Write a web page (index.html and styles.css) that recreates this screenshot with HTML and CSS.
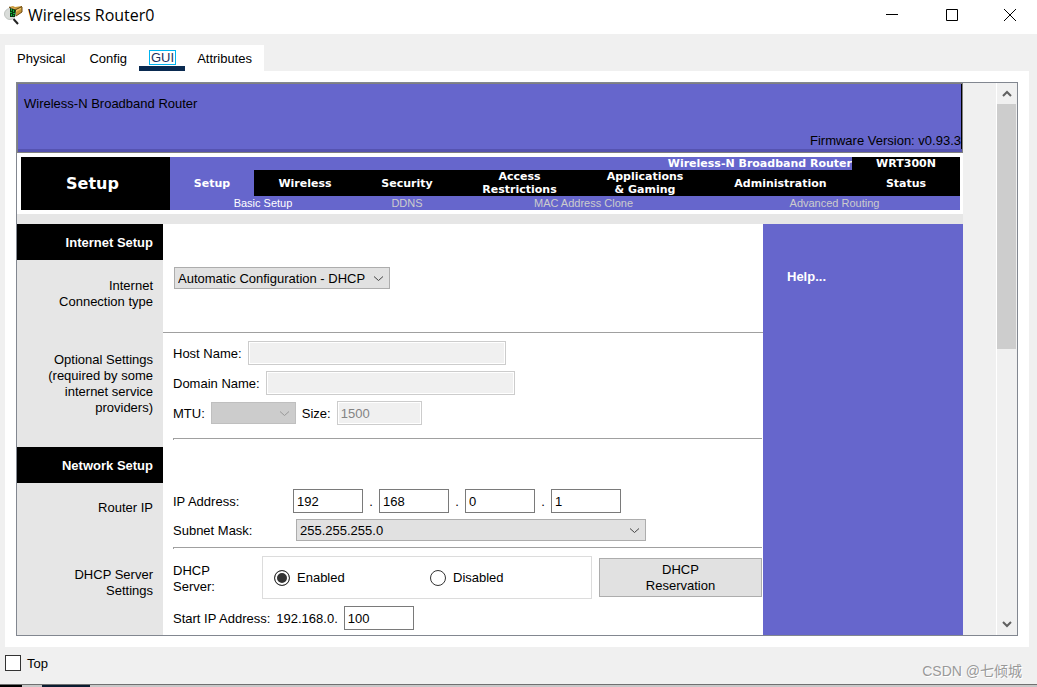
FILE: index.html
```html
<!DOCTYPE html>
<html lang="en">
<head>
<meta charset="utf-8">
<title>Wireless Router0</title>
<link rel="stylesheet" href="styles.css">
</head>
<body>
<div class="window">
  <header class="titlebar">
    <svg class="app-icon" viewBox="0 0 20 20" aria-hidden="true">
      <path d="M5 2 L9 1 L11 2 L18 1 L18 7 L12 11 L6 10 Z" fill="#c8963a"/>
      <path d="M7 2 L12 4 L17 2 L17 4 L12 7 L8 5 Z" fill="#efc567"/>
      <path d="M5 2 L11 5 L18 1.500" fill="none" stroke="#5e4210" stroke-width="1"/>
      <path d="M18 2 L18 7 L12 11" fill="none" stroke="#6e4c12" stroke-width="1"/>
      <circle cx="6" cy="9" r="5.500" fill="#d9dcd9" stroke="#c0c4c0" stroke-width="1"/>
      <path d="M6 3 L12 5 L11 12 L6 12 Z" fill="#07380f"/>
      <path d="M7 4h1v2h-1zM9 5h1v2h-1zM6 7h2v1h-2zM9 8h2v1h-2zM7 9h1v2h-1zM9 10h1v1h-1z" fill="#13b53c"/>
      <path d="M9.500 14 L14 19" stroke="#222" stroke-width="2"/>
    </svg>
    <h1 class="window-title">Wireless Router0</h1>
    <div class="window-controls">
      <button type="button" class="window-button" aria-label="Minimize"><svg viewBox="0 0 12 12"><path d="M0 5.5h12"/></svg></button>
      <button type="button" class="window-button" aria-label="Maximize"><svg viewBox="0 0 12 12"><path d="M.5 .5h11v11h-11z"/></svg></button>
      <button type="button" class="window-button" aria-label="Close"><svg viewBox="0 0 12 12"><path d="M0 0l12 12M12 0L0 12"/></svg></button>
    </div>
  </header>

  <div class="tabs" role="tablist">
    <button type="button" class="tab" role="tab">Physical</button>
    <button type="button" class="tab" role="tab">Config</button>
    <button type="button" class="tab tab-active" role="tab" aria-selected="true"><span class="tab-focus">GUI</span></button>
    <button type="button" class="tab" role="tab">Attributes</button>
  </div>

  <main class="panel">
    <div class="viewport">
      <div class="page">
        <div class="banner">
          <span class="banner-title">Wireless-N Broadband Router</span>
          <span class="banner-version">Firmware Version: v0.93.3</span>
        </div>

        <div class="masthead">
          <h2 class="masthead-title">Setup</h2>
          <nav class="menu">
            <span class="menu-product">Wireless-N Broadband Router</span>
            <span class="menu-model">WRT300N</span>
            <a href="#" class="menu-item menu-item-active">Setup</a>
            <a href="#" class="menu-item">Wireless</a>
            <a href="#" class="menu-item">Security</a>
            <a href="#" class="menu-item">Access<br>Restrictions</a>
            <a href="#" class="menu-item">Applications<br>&amp; Gaming</a>
            <a href="#" class="menu-item">Administration</a>
            <a href="#" class="menu-item">Status</a>
            <a href="#" class="submenu-item submenu-wide submenu-active">Basic Setup</a>
            <a href="#" class="submenu-item">DDNS</a>
            <a href="#" class="submenu-item submenu-wide">MAC Address Clone</a>
            <a href="#" class="submenu-item submenu-wide">Advanced Routing</a>
          </nav>
        </div>

        <div class="columns">
          <form class="settings">
            <section class="group group-internet">
              <div class="side">
                <h3 class="side-title">Internet Setup</h3>
                <label class="side-label" for="connection">Internet<br>Connection type</label>
              </div>
              <div class="fields">
                <span class="select connection">
                  <select id="connection"><option>Automatic Configuration - DHCP</option></select>
                  <svg viewBox="0 0 9 5"><path d="M0 .5l4.500 4l4.500-4"/></svg>
                </span>
              </div>
            </section>

            <section class="group group-optional">
              <div class="side">
                <p class="side-label">Optional Settings<br>(required by some<br>internet service<br>providers)</p>
              </div>
              <div class="fields">
                <div class="row">
                  <label for="host">Host Name:</label>
                  <input id="host" class="input-host" type="text" disabled>
                </div>
                <div class="row">
                  <label for="domain">Domain Name:</label>
                  <input id="domain" class="input-domain" type="text" disabled>
                </div>
                <div class="row">
                  <label for="mtu">MTU:</label>
                  <span class="select mtu">
                    <select id="mtu" disabled><option></option></select>
                    <svg viewBox="0 0 9 5"><path d="M0 .5l4.500 4l4.500-4"/></svg>
                  </span>
                  <label for="size">Size:</label>
                  <input id="size" class="input-size" type="text" value="1500" disabled>
                </div>
                <hr>
              </div>
            </section>

            <section class="group group-network">
              <div class="side">
                <h3 class="side-title">Network Setup</h3>
                <p class="side-label">Router IP</p>
              </div>
              <div class="fields">
                <div class="row">
                  <label class="ip-label" for="ip1">IP Address:</label>
                  <div class="octets">
                    <input id="ip1" type="text" value="192"><span class="dot">.</span>
                    <input aria-label="Second octet" type="text" value="168"><span class="dot">.</span>
                    <input aria-label="Third octet" type="text" value="0"><span class="dot">.</span>
                    <input aria-label="Fourth octet" type="text" value="1">
                  </div>
                </div>
                <div class="row">
                  <label class="mask-label" for="mask">Subnet Mask:</label>
                  <span class="select mask">
                    <select id="mask"><option>255.255.255.0</option></select>
                    <svg viewBox="0 0 9 5"><path d="M0 .5l4.500 4l4.500-4"/></svg>
                  </span>
                </div>
                <hr>
              </div>
            </section>

            <section class="group group-dhcp">
              <div class="side">
                <p class="side-label">DHCP Server<br>Settings</p>
              </div>
              <div class="fields">
                <div class="row dhcp-row">
                  <span class="dhcp-label" id="dhcp-label">DHCP<br>Server:</span>
                  <div class="radio-box" role="radiogroup" aria-labelledby="dhcp-label">
                    <label class="choice"><input type="radio" name="dhcp" checked>Enabled</label>
                    <label class="choice"><input type="radio" name="dhcp">Disabled</label>
                  </div>
                  <button type="button" class="reserve">DHCP<br>Reservation</button>
                </div>
                <div class="row">
                  <label for="start">Start IP Address:</label>
                  <span>192.168.0.</span>
                  <input id="start" type="text" value="100">
                </div>
              </div>
            </section>
          </form>
          <aside class="help"><a href="#">Help...</a></aside>
        </div>
      </div>

      <div class="scrollbar">
        <button type="button" class="scroll-button" aria-label="Scroll up"><svg viewBox="0 0 10 7"><path d="M1 6l4-4l4 4"/></svg></button>
        <div class="scroll-track"><div class="scroll-thumb"></div></div>
        <button type="button" class="scroll-button" aria-label="Scroll down"><svg viewBox="0 0 10 7"><path d="M1 1l4 4l4-4"/></svg></button>
      </div>
    </div>
  </main>

  <footer class="footer">
    <label class="top-choice"><input type="checkbox"><span>Top</span></label>
    <span class="watermark">CSDN @七倾城</span>
  </footer>
  <div class="desktop-edge"></div>
</div>
</body>
</html>
```

FILE: styles.css
```css
* { box-sizing: border-box; }

body {
  margin: 0;
  background: #f0f0f0;
  color: #000;
  font: 13px/16px "Liberation Sans", Arial, sans-serif;
}

h1, h2, h3, p { margin: 0; font-weight: normal; }
button, input, select { font: inherit; color: inherit; margin: 0; }
button { background: none; border: 0; padding: 0; }
a { color: inherit; text-decoration: none; }

.window {
  display: flex;
  flex-direction: column;
  min-height: 100vh;
}

/* Title bar */
.titlebar {
  display: flex;
  align-items: center;
  height: 34px;
  padding: 0 0 4px 4px;
  background: #fff;
}
.app-icon { width: 20px; height: 20px; margin-right: 4px; }
.window-title { flex: 1; font: 16px/20px "Open Sans", "Noto Sans", sans-serif; }
.window-controls { display: flex; }
.window-button {
  display: grid;
  place-items: center;
  width: 58px;
  height: 30px;
}
.window-button:last-child { width: 54px; }
.window-button:nth-child(2) { width: 62px; }
.window-button svg { width: 12px; height: 12px; fill: none; stroke: #000; stroke-width: 1; }

/* Tabs */
.tabs {
  display: flex;
  align-self: flex-start;
  margin: 11px 0 0 5px;
  background: #fff;
}
.tab { height: 26px; padding: 2px 12px 0; }
.tab-active {
  padding: 0 9px 0 10px;
  border-bottom: 5px solid #0a2a50;
  color: #1c3260;
}
.tab-focus { display: block; height: 15px; margin-top: 3px; border: 1px solid #00b4f0; padding: 0 1px; line-height: 14px; }

/* Panel and scrolled page */
.panel {
  display: flex;
  flex: 1;
  margin: 0 8px 0 5px;
  padding: 11px;
  background: #fff;
}
.viewport { display: flex; flex: 1; border: 1px solid #828790; background: #f0f0f0; }
.page {
  display: flex;
  flex: 1;
  flex-direction: column;
  margin-right: 33px;
  background: #e6e6e6;
}

.banner {
  display: flex;
  flex-direction: column;
  justify-content: space-between;
  height: 70px;
  padding: 12px 1px 0 6px;
  border: 1px solid #808080;
  background: #6666cc;
  box-shadow: inset 0 -3px #5553b0, inset -1px 0 #000;
}
.banner-version { align-self: flex-end; margin-bottom: 3px; }

.masthead { display: flex; padding: 4px 3px 4px 4px; background: #fff; }
.masthead-title {
  display: grid;
  place-items: center;
  width: 149px;
  padding: 1px 6px 0 0;
  background: #000;
  color: #fff;
  font: bold 16px/20px "DejaVu Sans", Verdana, sans-serif;
}
.menu {
  display: grid;
  flex: 1;
  grid-template-columns: 84fr 102fr 102fr 123fr 128fr 143fr 108fr;
  grid-template-rows: 13px 26px 14px;
  background: #6666cc;
  color: #fff;
  font: bold 11px/13px "DejaVu Sans", Verdana, sans-serif;
  text-align: center;
}
.menu-product { grid-column: span 6; text-align: right; }
.menu-model { background: #000; }
.menu-item { display: grid; align-content: center; background: #000; }
.menu-item-active { background: #6666cc; }
.submenu-item { color: #ccc; font: 11px/14px "Liberation Sans", Arial, sans-serif; }
.submenu-wide { grid-column: span 2; }
.submenu-active { color: #fff; }

.columns { display: flex; flex: 1; margin-top: 10px; }
.settings { display: flex; flex: 1; flex-direction: column; background: #fff; }
.help {
  width: 200px;
  padding: 45px 24px;
  background: #6666cc;
  color: #fff;
  font-weight: bold;
}

/* Setting groups */
.group { display: flex; }
.side { width: 146px; background: #e6e6e6; text-align: right; }
.side-title { height: 36px; padding: 11px 10px 9px; background: #000; color: #fff; font: bold 13px/16px "Liberation Sans", Arial, sans-serif; }
.side-label { display: block; padding: 18px 10px 0 0; }
.fields {
  display: flex;
  flex: 1;
  flex-direction: column;
  gap: 6px;
  padding-left: 10px;
}
.row { display: flex; align-items: center; gap: 6px; }
.row > label, .row > span:not(.select), .top-choice span { padding-top: 2px; }
.fields hr {
  width: 100%;
  height: 2px;
  margin: 0 0 -1px;
  border: 0;
  border-top: 1px solid #a0a0a0;
  border-left: 1px solid #a0a0a0;
}

.group-internet { min-height: 109px; }
.group-internet .fields { padding: 43px 0 0 11px; border-bottom: 1px solid #a0a0a0; }
.group-optional { min-height: 114px; }
.group-optional .side-label, .group-dhcp .side-label { padding-top: 19px; }
.group-optional .fields { padding-top: 8px; padding-right: 1px; }
.group-optional .fields hr { margin-top: 7px; }
.group-network .side-label { padding-top: 17px; }
.group-network .fields { padding-top: 42px; padding-right: 1px; }
.group-dhcp { flex: 1; }
.group-dhcp .fields { gap: 7px; padding: 8px 1px 5px 10px; }

/* Controls */
input[type="text"] {
  width: 70px;
  height: 24px;
  padding: 0 3px;
  border: 1px solid #7a7a7a;
  border-radius: 0;
  background: #fff;
}
input[type="text"]:disabled {
  border-color: #ccc;
  background: #f0f0f0;
  box-shadow: inset 0 0 0 1px #fff;
  color: #838383;
}
input[type="text"].input-host { width: 258px; }
input[type="text"].input-domain { width: 249px; }
input[type="text"].input-size { width: 85px; }

.select { position: relative; display: block; }
.select select {
  display: block;
  width: 100%;
  height: 22px;
  padding: 2px 3px 0;
  appearance: none;
  border: 1px solid #adadad;
  border-radius: 0;
  background: #e1e1e1;
}
.select select:disabled { border-color: #bfbfbf; background: #ccc; opacity: 1; }
.select svg {
  position: absolute;
  top: 9px;
  right: 7px;
  width: 9px;
  height: 5px;
  overflow: visible;
  fill: none;
  stroke: #444;
  stroke-width: 1;
  pointer-events: none;
}
.select.mtu svg { stroke: #999; }
.connection { width: 216px; }
.mtu { width: 85px; }
.mask { width: 350px; }
.ip-label { width: 114px; }
.mask-label { width: 117px; }
.octets { display: flex; align-items: center; }
.dot { width: 16px; padding-top: 2px; text-align: center; }

.dhcp-label { width: 83px; }
.radio-box { display: flex; flex: 1; height: 43px; padding: 1px 0 0 11px; border: 1px solid #dcdcdc; }
.choice { display: flex; align-items: center; gap: 7px; width: 156px; }
.choice input {
  width: 16px;
  height: 16px;
  appearance: none;
  border: 1px solid #333;
  border-radius: 50%;
  background: #fff;
}
.choice input:checked { background: #333; box-shadow: inset 0 0 0 2px #fff; }
.reserve { width: 163px; height: 39px; margin-left: 1px; padding-top: 1px; border: 1px solid #adadad; background: #e1e1e1; }

/* Scroll bar */
.scrollbar { display: flex; flex-direction: column; width: 21px; padding-right: 1px; border-left: 1px solid #fff; }
.scroll-button { display: grid; place-items: center; height: 21px; }
.scroll-button svg { width: 10px; height: 7px; fill: none; stroke: #606060; stroke-width: 2; }
.scroll-track { flex: 1; }
.scroll-thumb { height: 48%; background: #cdcdcd; }

/* Footer */
.footer { display: flex; justify-content: space-between; height: 37px; padding: 8px 15px 0 5px; }
.top-choice { display: flex; align-items: center; gap: 6px; height: 16px; }
.top-choice input { width: 16px; height: 16px; margin: 0; appearance: none; border: 1px solid #333; background: #fff; }
.watermark {
  padding-top: 6px;
  color: #999;
  font: 14px/20px "Liberation Sans", "Noto Sans CJK SC", sans-serif;
  text-shadow: 1px 1px #fff;
}
.desktop-edge {
  height: 3px;
  border-top: 1px solid #707070;
  background: linear-gradient(to right, #000 22px, #c8c8c8 22px 42px, #0a1c30 42px 90px, #c8c8c8 90px);
}
```
